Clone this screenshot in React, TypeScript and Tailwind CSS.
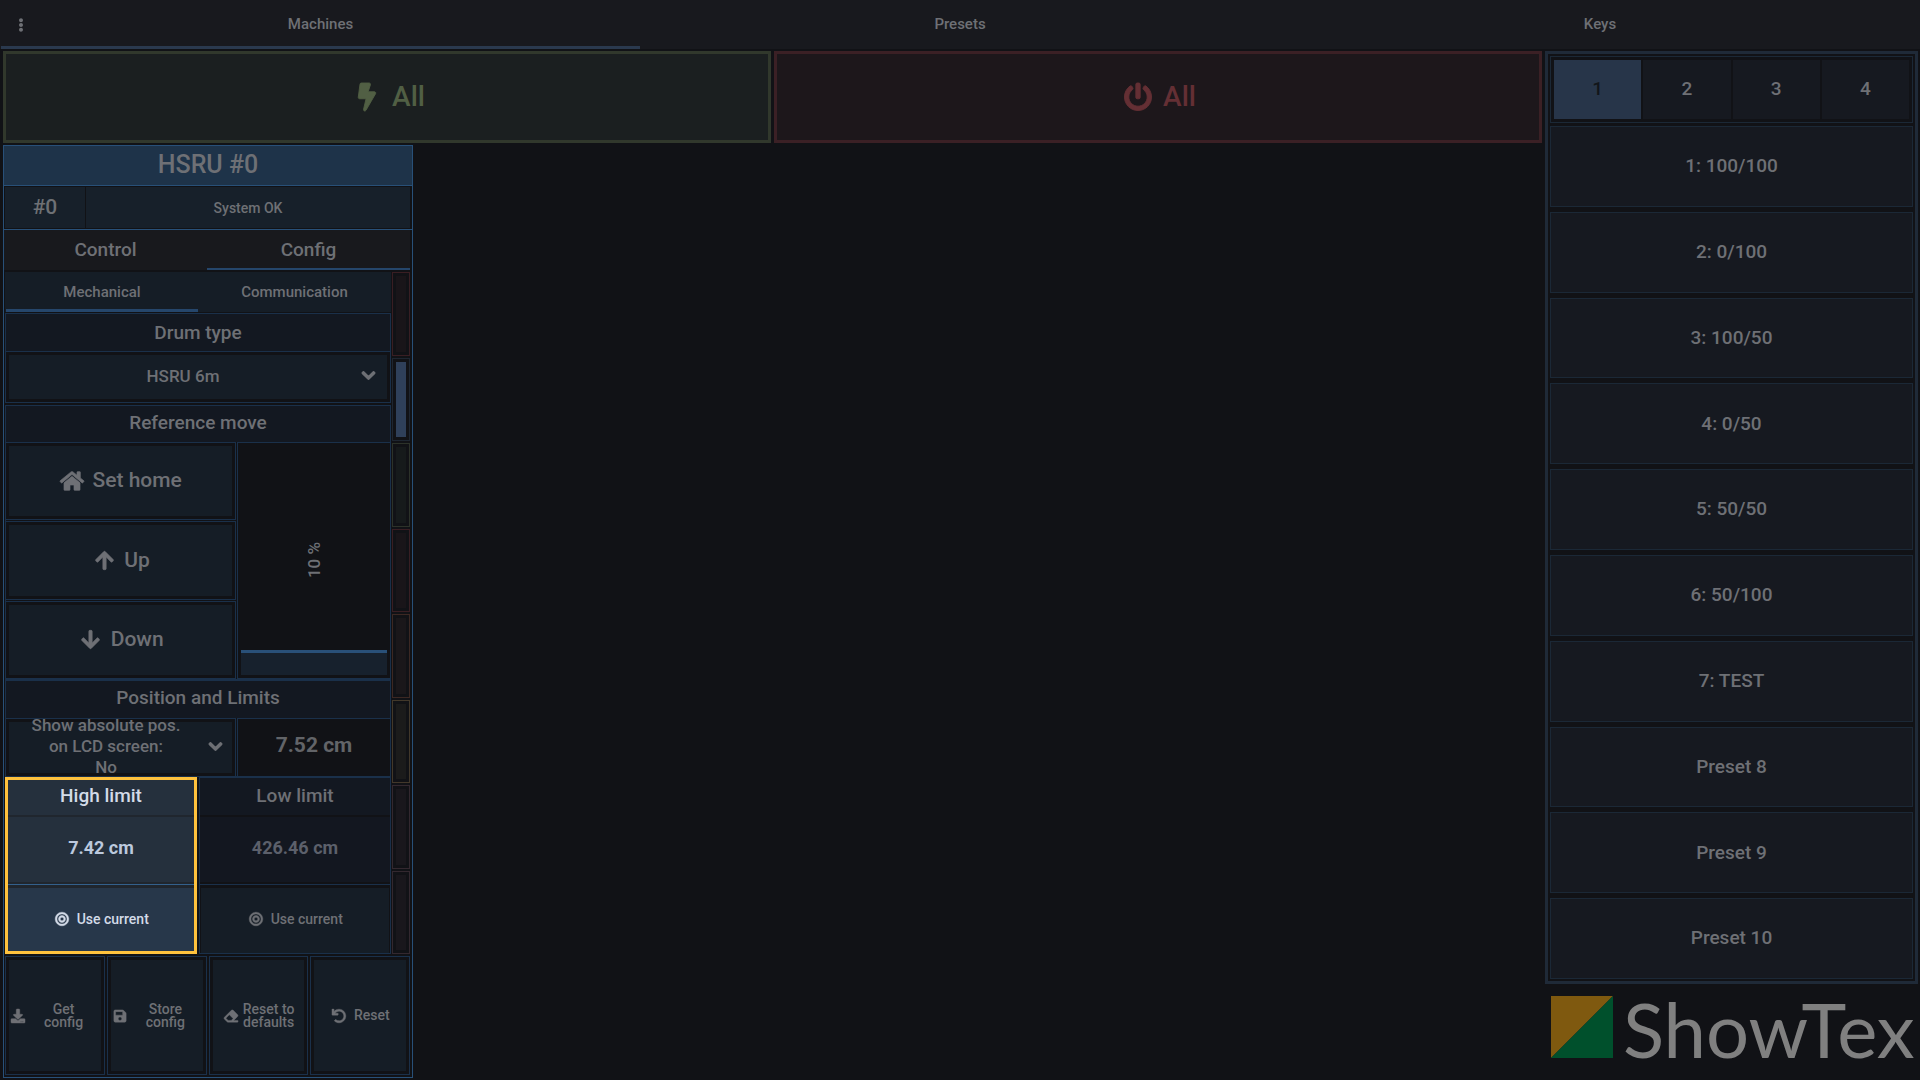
import { useState } from "react";
import type { ReactNode } from "react";
import clsx from "clsx";
import {
  FaArrowDown,
  FaArrowUp,
  FaBolt,
  FaBullseye,
  FaChevronDown,
  FaDownload,
  FaEllipsisV,
  FaEraser,
  FaHome,
  FaPowerOff,
  FaSave,
  FaUndo,
} from "react-icons/fa";

const pages = ["Machines", "Presets", "Keys"];

const presets = [
  "1: 100/100",
  "2: 0/100",
  "3: 100/50",
  "4: 0/50",
  "5: 50/50",
  "6: 50/100",
  "7: TEST",
  "Preset 8",
  "Preset 9",
  "Preset 10",
];

const leds = [
  { frame: "border-[#391e23]", fill: "bg-[#191519]" },
  { frame: "border-[#1e2631]", fill: "bg-[#2f405a]" },
  { frame: "border-[#2c3229]", fill: "bg-[#161a1b]" },
  { frame: "border-[#391e23]", fill: "bg-[#191519]" },
  { frame: "border-[#3c2823]", fill: "bg-[#1a171a]" },
  { frame: "border-[#42382a]", fill: "bg-[#1b1b1b]" },
  { frame: "border-[#33282f]", fill: "bg-[#19171c]" },
  { frame: "border-[#33282f]", fill: "bg-[#19171c]" },
];

// fixed-width icon box so labels line up whatever the glyph
function Icon({ children }: { children: ReactNode }) {
  return (
    <span className="flex w-[1.25em] shrink-0 items-center justify-center [&>svg]:shrink-0 [&>svg]:overflow-visible [&>svg]:stroke-[16]">
      {children}
    </span>
  );
}

function SectionTitle({ children, className = "h-[37px]" }: { children: ReactNode; className?: string }) {
  return (
    <h3
      className={clsx(
        "flex shrink-0 items-center justify-center bg-[#131821] text-[19px] leading-6 font-medium",
        className,
      )}
    >
      {children}
    </h3>
  );
}

function FramedButton({ children, className }: { children: ReactNode; className?: string }) {
  return (
    <div className="flex min-w-0 flex-1 border border-[#1a304a] p-[3px]">
      <button className={clsx("flex w-full min-w-0 items-center justify-center bg-[#151d26] font-medium", className)}>
        {children}
      </button>
    </div>
  );
}

function TopTabs() {
  return (
    <header className="relative h-[49px] shrink-0 bg-[#18191e]">
      <nav className="grid h-full grid-cols-3">
        {pages.map((p, i) => (
          <button
            key={p}
            className={clsx(
              "border-b-3 pt-0.5 text-[15px] font-medium",
              i === 0 ? "ml-px border-[#2a394e]" : "border-transparent",
            )}
          >
            {p}
          </button>
        ))}
      </nav>
      <button aria-label="Menu" className="absolute top-0 left-0 flex h-full w-[42px] items-center justify-center text-sm">
        <FaEllipsisV />
      </button>
    </header>
  );
}

function Limit({ label, value, active }: { label: string; value: string; active?: boolean }) {
  return (
    <div
      className={clsx(
        "flex min-w-0 flex-col",
        active ? "border-3 border-[#ffc23d] bg-[#20262e] text-[#d3dbe8]" : "border border-[#1a304a]",
      )}
    >
      <h4
        className={clsx(
          "flex shrink-0 items-center justify-center text-[19px] leading-6 font-medium",
          active ? "h-[35px] bg-[#25303d] pb-1" : "h-[37px] bg-[#131821] pb-0.5",
        )}
      >
        {label}
      </h4>
      <input
        aria-label={label}
        defaultValue={value}
        className={clsx(
          "mt-0.5 mb-0.5 h-[65px] w-full min-w-0 pb-1 text-center text-[18px] font-bold",
          active ? "bg-[#25303d] text-[#bcc9de]" : "bg-[#131720] text-[#5c606b]",
        )}
      />
      <div className={clsx("flex flex-1 border-t pt-[3px]", active ? "border-[#33608c]" : "border-[#1a304a] px-px")}>
        <button
          className={clsx(
            "flex w-full items-center justify-center gap-1.5 text-sm font-medium",
            active ? "bg-[#27374a] pb-0.5" : "bg-[#151d26] pb-1",
          )}
        >
          <Icon>
            <FaBullseye />
          </Icon>
          Use current
        </button>
      </div>
    </div>
  );
}

function ReferenceMove() {
  const [speed, setSpeed] = useState(10);
  return (
    <section className="flex h-[275px] shrink-0 flex-col border border-[#1a304a]">
      <SectionTitle className="h-9 pb-0.5">Reference move</SectionTitle>
      <div className="-mx-px flex flex-1 gap-px">
        <div className="flex w-[231px] flex-col gap-px">
          <FramedButton className="gap-[7px] text-[21px]">
            <Icon>
              <FaHome className="text-2xl" />
            </Icon>
            Set home
          </FramedButton>
          <FramedButton className="gap-[7px] text-[21px]">
            <Icon>
              <FaArrowUp />
            </Icon>
            Up
          </FramedButton>
          <FramedButton className="gap-[7px] text-[21px]">
            <Icon>
              <FaArrowDown />
            </Icon>
            Down
          </FramedButton>
        </div>
        <div className="relative flex flex-1 flex-col justify-end border border-[#1a304a] p-[3px]">
          <div
            className="border-t-3 border-[#295078] bg-[#17212d]"
            style={{ height: `${speed + 1}%` }}
          />
          <span className="absolute inset-0 flex items-center justify-center">
            <span className="rotate-180 text-[17px] leading-5 font-medium [writing-mode:vertical-rl]">{speed} %</span>
          </span>
          <input
            type="range"
            aria-label="Speed"
            min={0}
            max={98}
            value={speed}
            onChange={(e) => setSpeed(Number(e.target.value))}
            className="absolute inset-0 h-full w-full opacity-0 [direction:rtl] [writing-mode:vertical-lr]"
          />
        </div>
      </div>
    </section>
  );
}

function ConfigPane() {
  return (
    <div className="flex min-w-0 flex-1 flex-col">
      <nav className="grid h-10 shrink-0 grid-cols-2 bg-[#151d26] text-[15px] font-medium">
        <button className="ml-px border-b-3 border-[#25466b] pt-[3px]">Mechanical</button>
        <button className="border-b-3 border-transparent pt-[3px]">Communication</button>
      </nav>

      <section className="mt-px mb-0.5 flex h-[90px] shrink-0 flex-col border border-[#1a304a]">
        <SectionTitle>
          <label htmlFor="drum">Drum type</label>
        </SectionTitle>
        <div className="relative flex flex-1 border-t border-[#1a304a] p-[3px]">
          <select
            id="drum"
            className="w-full appearance-none bg-[#151d26] pr-[30px] text-center text-[17px] font-medium [text-align-last:center]"
          >
            <option>HSRU 6m</option>
          </select>
          <FaChevronDown strokeWidth={40} className="pointer-events-none absolute top-4 right-3.5 text-[15px]" />
        </div>
      </section>

      <ReferenceMove />

      <section className="flex h-[97px] shrink-0 flex-col border border-[#1a304a]">
        <SectionTitle className="h-[37px] pb-1">Position and Limits</SectionTitle>
        <div className="-mx-px flex h-[59px] gap-px">
          <div className="relative flex w-[231px] border border-[#1a304a] p-[3px]">
            <div className="flex w-full flex-col items-center justify-center bg-[#151d26] pr-[29px] pb-0.5 text-[17px] leading-[21px] font-medium">
              <label htmlFor="lcd" className="-mt-1.5 text-center">
                Show absolute pos.
                <br />
                on LCD screen:
              </label>
              <select id="lcd" className="-mb-1.5 h-[21px] w-full shrink-0 appearance-none text-center leading-[21px] [text-align-last:center]">
                <option>No</option>
              </select>
            </div>
            <FaChevronDown strokeWidth={40} className="pointer-events-none absolute top-5 right-3 text-[15px]" />
          </div>
          <output className="flex flex-1 items-center justify-center border border-[#1a304a] pb-1 text-[21px] font-bold text-[#626468]">
            7.52 cm
          </output>
        </div>
      </section>

      <div className="grid flex-1 grid-cols-2 gap-0.5">
        <Limit label="High limit" value="7.42 cm" active />
        <Limit label="Low limit" value="426.46 cm" />
      </div>
    </div>
  );
}

function MachinePanel() {
  return (
    <article className="flex w-[410px] flex-1 flex-col border border-[#285078]">
      <h2 className="flex h-10 shrink-0 items-center justify-center border-b border-[#285078] bg-[#1e3349] pb-px text-[25px] leading-7 font-medium">
        HSRU #0
      </h2>
      <div className="flex h-11 shrink-0 gap-px border-b border-[#285078] py-px pr-0.5 pl-px font-medium">
        <span className="flex w-20 items-center justify-center bg-[#17202a] text-[21px]">#0</span>
        <span className="flex flex-1 items-center justify-center bg-[#17202a] text-sm">System OK</span>
      </div>
      <nav className="mb-0.5 grid h-10 shrink-0 grid-cols-2 pr-0.5 text-[19px] font-medium">
        <button className="border-b-2 border-transparent bg-[#18191d] pt-0.5">Control</button>
        <button className="border-b-2 border-[#25466b] bg-[#18191d] pt-0.5">Config</button>
      </nav>

      <div className="flex min-h-0 flex-1 gap-px pr-0.5 pl-px">
        <ConfigPane />
        <div className="flex w-[18px] flex-col gap-0.5">
          {leds.map((led, i) => (
            <div key={i} className={clsx("flex flex-1 border p-[3px]", led.frame)}>
              <div className={clsx("flex-1", led.fill)} />
            </div>
          ))}
        </div>
      </div>

      <footer className="mt-0.5 mb-0.5 flex h-[119px] shrink-0 gap-0.5 pr-0.5 pl-px">
        <FramedButton className="text-sm leading-[13px]">
          <Icon>
            <FaDownload />
          </Icon>
          <span className="flex-1">
            Get
            <br />
            config
          </span>
        </FramedButton>
        <FramedButton className="text-sm leading-[13px]">
          <Icon>
            <FaSave />
          </Icon>
          <span className="flex-1">
            Store
            <br />
            config
          </span>
        </FramedButton>
        <FramedButton className="gap-[3px] text-sm leading-[13px]">
          <Icon>
            <FaEraser />
          </Icon>
          <span>
            Reset to
            <br />
            defaults
          </span>
        </FramedButton>
        <FramedButton className="gap-1.5 text-sm leading-[13px]">
          <Icon>
            <FaUndo />
          </Icon>
          Reset
        </FramedButton>
      </footer>
    </article>
  );
}

function PresetPanel() {
  const [bank, setBank] = useState(1);
  return (
    <section className="flex flex-1 flex-col gap-[5px] border-3 border-[#1f2a38] p-0.5">
      <div className="-mb-0.5 grid h-[67px] shrink-0 grid-cols-4 gap-0.5 border border-[#1b2836] p-[3px] text-[19px] font-medium">
        {[1, 2, 3, 4].map((n) => (
          <button
            key={n}
            onClick={() => setBank(n)}
            className={clsx(n === bank ? "bg-[#273549] text-[#12151a]" : "bg-[#161920]")}
          >
            {n}
          </button>
        ))}
      </div>
      {presets.map((p) => (
        <button key={p} className="min-h-10 flex-1 border border-[#1b2836] bg-[#161920] text-[19px] font-medium">
          {p}
        </button>
      ))}
    </section>
  );
}

function Logo() {
  return (
    <div className="flex h-24 shrink-0 items-start gap-2.5 pt-3 pl-1.5">
      <svg viewBox="0 0 62 62" className="h-[62px] w-[62px] shrink-0" aria-hidden="true">
        <path d="M0 0H62L0 62Z" fill="#7f590f" />
        <path d="M62 0V62H0Z" fill="#00502c" />
      </svg>
      <span className="font-['Lato',sans-serif] text-[76px] leading-[66px] text-[#808080]">ShowTex</span>
    </div>
  );
}

export default function App() {
  return (
    <div className="flex min-h-screen flex-col bg-[#111216] font-['Roboto',sans-serif] text-[#6e7075]">
      <TopTabs />
      <main className="flex flex-1 gap-[3px] pt-0.5 pr-0.5 pl-[3px]">
        <div className="flex min-w-0 flex-1 flex-col gap-0.5 pb-0.5">
          <div className="grid h-[92px] shrink-0 grid-cols-2 gap-[3px] text-[28px] font-medium">
            <button className="flex items-center justify-center gap-2 border-3 border-[#31382c] bg-[#1b1f20] text-[#515f44]">
              <Icon>
                <FaBolt />
              </Icon>
              All
            </button>
            <button className="flex items-center justify-center gap-2 border-3 border-[#3b2025] bg-[#1d171b] text-[#642f34]">
              <Icon>
                <FaPowerOff />
              </Icon>
              All
            </button>
          </div>
          <MachinePanel />
        </div>
        <aside className="flex w-[373px] shrink-0 flex-col">
          <PresetPanel />
          <Logo />
        </aside>
      </main>
    </div>
  );
}
